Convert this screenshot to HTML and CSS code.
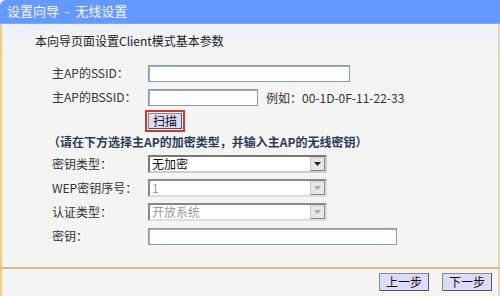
FILE: index.html
```html
<!DOCTYPE html>
<html>
<head>
<meta charset="utf-8">
<link rel="stylesheet" href="styles.css">
</head>
<body>
<div class="win">
  <div class="title">设置向导 &nbsp;-&nbsp; 无线设置</div>
  <div class="panel">
    <div class="intro">本向导页面设置Client模式基本参数</div>
    <div class="row"><span class="lbl">主AP的SSID：</span><span class="inp w200"></span></div>
    <div class="row"><span class="lbl">主AP的BSSID：</span><span class="inp w110"></span><span class="hint">例如：00-1D-0F-11-22-33</span></div>
    <div class="scanrow"><span class="scanwrap"><span class="btn scan">扫描</span></span></div>
    <div class="note">（请在下方选择主AP的加密类型，并输入主AP的无线密钥）</div>
    <div class="row"><span class="lbl">密钥类型：</span><span class="sel"><span class="val">无加密</span><span class="arrow"><svg width="7" height="4" viewBox="0 0 7 4"><path d="M0 0h7L3.5 4z" fill="#222"/></svg></span></span></div>
    <div class="row"><span class="lbl">WEP密钥序号：</span><span class="sel dis"><span class="val">1</span><span class="arrow"><svg width="7" height="4" viewBox="0 0 7 4"><path d="M0 0h7L3.5 4z" fill="#aaa"/></svg></span></span></div>
    <div class="row"><span class="lbl">认证类型：</span><span class="sel dis"><span class="val">开放系统</span><span class="arrow"><svg width="7" height="4" viewBox="0 0 7 4"><path d="M0 0h7L3.5 4z" fill="#aaa"/></svg></span></span></div>
    <div class="row"><span class="lbl">密钥：</span><span class="inp w249"></span></div>
  </div>
  <div class="foot">
    <span class="btn nav">上一步</span>
    <span class="btn nav">下一步</span>
  </div>
</div>
</body>
</html>
```
FILE: styles.css
```css
* { box-sizing: border-box; }
html, body { margin: 0; padding: 0; }
body {
  width: 500px; height: 296px; overflow: hidden;
  font-family: "Noto Sans CJK SC", "DejaVu Sans", sans-serif;
  font-size: 12px; color: #333;
  background: #f4f4f2;
}
.win { width: 500px; height: 296px; display: flex; flex-direction: column; }
.title {
  height: 24px; background: #6699ff; color: #f4f8ff;
  font-size: 13px; line-height: 22px; padding-left: 7px;
  border-top-left-radius: 6px;
  border-bottom: 1px solid #7ea8f0;
}
.panel {
  height: 245px;
  background: linear-gradient(#eef2f6, #f4f4f3 30px);
  border-left: 2px solid #f4c88c;
  border-right: 2px solid #e9d3ae;
  border-bottom: 2px solid #d9b98f;
  padding: 7px 0 0 33px;
}
.intro { height: 20px; line-height: 20px; color: #222; margin-bottom: 10px; }
.row { display: flex; align-items: center; height: 24px; }
.lbl { width: 113px; padding-left: 17px; line-height: 18px; }
.inp { display: inline-block; height: 17px; background: #fff; border: 1px solid #7f9db9; box-shadow: inset 1px 1px 0 #aab; }
.w200 { width: 202px; }
.w110 { width: 110px; }
.w249 { width: 249px; }
.hint { margin-left: 8px; color: #333; }
.scanrow { height: 23px; padding-left: 110px; display: flex; align-items: center; }
.scanwrap { border: 2px solid #c73a3a; padding: 1px; display: inline-flex; }
.btn {
  display: inline-flex; align-items: center; justify-content: center;
  background: #dcdcf8; border: 1px solid #888;
  border-right-color: #555; border-bottom-color: #555;
  color: #111; font-size: 12px;
}
.scan { width: 34px; height: 16px; }
.note { height: 20px; line-height: 20px; margin: 0 0 0 13px; color: #2c3c58; font-weight: bold; font-size: 12px; }
.sel {
  display: inline-flex; width: 179px; height: 18px; background: #fff;
  border: 2px solid #777; border-right-color: #ccc; border-bottom-color: #ccc;
}
.sel .val { flex: 1; line-height: 14px; padding-left: 2px; color: #111; }
.sel.dis { border-color: #888 #ddd #ddd #888; }
.sel.dis .val { color: #999; }
.arrow {
  width: 15px; height: 14px; background: #e6e6e6; display: flex; align-items: center; justify-content: center;
  border: 1px solid #ccc; border-right-color: #888; border-bottom-color: #888;
}
.foot {
  flex: 1; background: #f4f4f3;
  border-left: 2px solid #f4c88c; border-right: 2px solid #e9d3ae;
  display: flex; justify-content: flex-end; align-items: center; gap: 13px;
  padding-right: 6px; padding-bottom: 2px;
}
.nav { width: 50px; height: 18px; }
```
